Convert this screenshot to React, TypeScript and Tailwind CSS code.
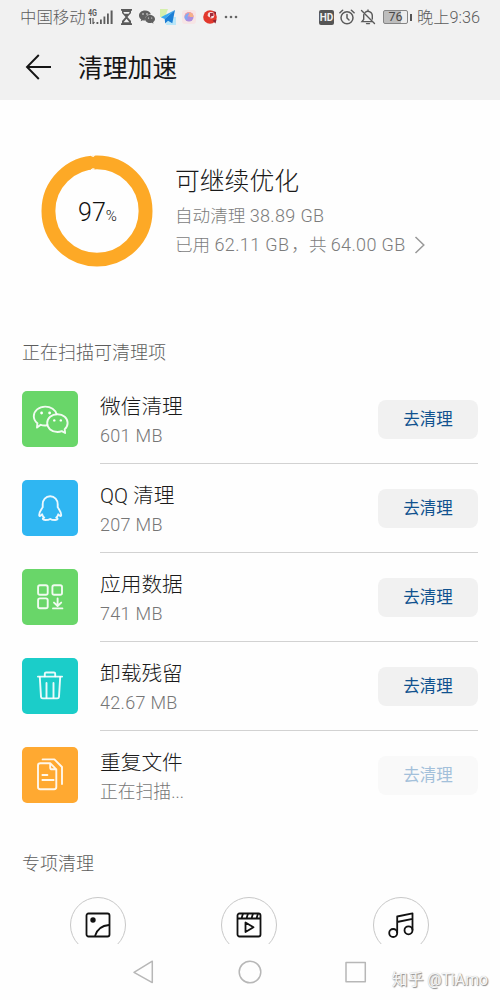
import type { ReactNode } from "react";
import clsx from "clsx";

type CleanItem = {
  title: string;
  size: string;
  color: string;
  icon: ReactNode;
  disabled?: boolean;
};

const items: CleanItem[] = [
  { title: "微信清理", size: "601 MB", color: "bg-[#69d669]", icon: <WechatIcon /> },
  { title: "QQ 清理", size: "207 MB", color: "bg-[#2fb6f2]", icon: <PenguinIcon /> },
  { title: "应用数据", size: "741 MB", color: "bg-[#69d669]", icon: <AppsIcon /> },
  { title: "卸载残留", size: "42.67 MB", color: "bg-[#1bcdc9]", icon: <TrashIcon /> },
  { title: "重复文件", size: "正在扫描...", color: "bg-[#ffa931]", icon: <FilesIcon />, disabled: true },
];

function TileSvg({ children }: { children: ReactNode }) {
  return (
    <svg
      viewBox="0 0 56 56"
      className="size-14"
      fill="none"
      stroke="#fff"
      strokeOpacity="0.9"
      strokeWidth="1.9"
      strokeLinecap="round"
      strokeLinejoin="round"
    >
      {children}
    </svg>
  );
}

function WechatIcon() {
  return (
    <TileSvg>
      <path d="M25 34.3C22.8 34.7 20.6 34.5 18.7 33.8L15 36.6L15.4 32.2C12.9 30.2 11.8 28 11.8 25.2C11.8 19.8 16.9 15.6 23.2 15.6C29 15.6 33.4 18.9 34.5 23" />
      <path d="M35.5 23.2C41.3 23.2 45.6 27.1 45.6 32.1C45.6 34.6 44.5 36.8 42.7 38.3L43.1 42L39.8 40.2C38.5 40.7 37 41 35.5 41C29.6 41 25.2 37.1 25.2 32.1C25.2 27.1 29.6 23.2 35.5 23.2Z" />
      <g fill="#fff" stroke="none">
        <circle cx="19.6" cy="22" r="1.4" />
        <circle cx="27.6" cy="22" r="1.4" />
        <circle cx="32.3" cy="29.4" r="1.2" />
        <circle cx="38.8" cy="29.4" r="1.2" />
      </g>
    </TileSvg>
  );
}

function PenguinIcon() {
  return (
    <TileSvg>
      <path d="M28.2 16.3C23.7 16.3 20.7 19.8 20.7 24.3V27.3C19 29.7 17.1 32.5 17.2 35.1C17.4 36.8 19 35.8 20.1 34.3C20.5 35.7 21.2 36.8 22.2 37.7C20 38.6 20.6 40 23.2 40C25.3 40 27.1 39.7 28.2 38.9C29.3 39.7 31.1 40 33.2 40C35.8 40 36.4 38.6 34.2 37.7C35.2 36.8 35.9 35.7 36.3 34.3C37.4 35.8 39 36.8 39.2 35.1C39.3 32.5 37.4 29.7 35.7 27.3V24.3C35.7 19.8 32.7 16.3 28.2 16.3Z" />
    </TileSvg>
  );
}

function AppsIcon() {
  return (
    <TileSvg>
      <rect x="16.1" y="16.2" width="9.6" height="9.6" rx="1.8" />
      <rect x="30.4" y="16.2" width="9.6" height="9.6" rx="1.8" />
      <rect x="16.1" y="29.4" width="9.6" height="9.8" rx="1.8" />
      <path d="M35.6 29.5V36.6M32 33.6L35.6 37L39.2 33.6M31 39.4H40.4" />
    </TileSvg>
  );
}

function TrashIcon() {
  return (
    <TileSvg>
      <path d="M15.9 18.6H40.1" />
      <path d="M22.8 18.3V15.8C22.8 15 23.3 14.5 24.1 14.5H31.9C32.7 14.5 33.2 15 33.2 15.8V18.3" />
      <path d="M17.8 19L19 38.8C19.1 39.8 19.7 40.4 20.7 40.4H35.3C36.3 40.4 36.9 39.8 37 38.8L38.2 19" />
      <path d="M24.5 25V39.8M31.5 25V39.8" />
    </TileSvg>
  );
}

function FilesIcon() {
  return (
    <TileSvg>
      <path d="M28.2 16.2H18.2C16.9 16.2 16 17.1 16 18.4V40.1C16 41.4 16.9 42.3 18.2 42.3H32.1C33.4 42.3 34.3 41.4 34.3 40.1V22.3L28.2 16.2V20.4C28.2 21.6 28.9 22.3 30.1 22.3H34.3" />
      <path d="M20.6 12.4H32.4L40 20V37M20.4 28H25.4M20.4 33H31.6" />
    </TileSvg>
  );
}

function StatusBar() {
  return (
    <div className="flex h-[34px] items-center pr-[19px] pl-5 text-[#5c5c5c]">
      <span className="w-[66px] pt-[2px] text-[16.4px]">中国移动</span>
      <svg viewBox="0 0 26 18" className="ml-[2px] h-[18px] w-[26px]" fill="#5c5c5c">
        <text x="0" y="7.5" fontSize="8.5" fontWeight="700" textLength="9" lengthAdjust="spacingAndGlyphs">
          4G
        </text>
        <path d="M2.5 10v6M2.5 10l-1.5 2M5 16v-6M5 16l1.5-2" stroke="#5c5c5c" strokeWidth="1.2" />
        <path d="M8.5 14h1.8v2H8.5zM12 11.5h1.8V16H12zM15.5 8.5h1.8V16h-1.8zM19 5.5h1.8V16H19zM22.6 2.5h2V16h-2z" />
      </svg>
      <svg viewBox="0 0 14 16" className="ml-[5px] h-4 w-3.5" fill="#5a5a5a">
        <path d="M2 0h11v1.7H2zM2 14.3h11V16H2zM3 1.7h9V4L8.5 8 12 12v2.3H3V12l3.5-4L3 4z" />
        <path d="M4.3 3h6.4L9.6 4.7H5.4zM4.6 13.3L7.5 9.8l2.9 3.5z" fill="#f1f1f1" />
      </svg>
      <svg viewBox="0 0 16 14" className="ml-[6px] h-3.5 w-4" fill="#606060">
        <path d="M6 .5C2.6.5 0 2.7 0 5.4c0 1.6.9 3 2.200 3.900L1.700 11.300l2.100-1.100c.9.2 1.400.3 2.200.2C5.500 7.200 8 4.500 11.900 4.300 11.300 2.100 9 .5 6 .5z" />
        <path d="M11 5.100c-2.800 0-5 1.800-5 4s2.200 4 5 4c.7 0 1.300-.1 1.900-.3l1.600.9-.4-1.500c1.200-.8 1.900-1.900 1.900-3.100 0-2.200-2.200-4-5-4z" />
        <g fill="#f1f1f1">
          <circle cx="4" cy="4" r=".8" />
          <circle cx="8" cy="4" r=".8" />
          <circle cx="9.5" cy="8" r=".6" />
          <circle cx="12.7" cy="8" r=".6" />
        </g>
      </svg>
      <svg viewBox="0 0 16 16" className="ml-[5px] size-4">
        <path d="M0 0h8L5 8H0z" fill="#d5efac" />
        <path d="M8 8h8v8H6z" fill="#b9e6f8" />
        <path d="M15 1L.8 8.3l3.9 1.7z" fill="#37aaf0" />
        <path d="M15 1L4.7 10l.5 4.5L8 11.7l4.3 2.6z" fill="#1b7fd6" />
      </svg>
      <svg viewBox="0 0 14 14" className="ml-[6px] size-3.5">
        <rect width="14" height="14" rx="3" fill="#f7e5e5" />
        <circle cx="7" cy="7" r="4.5" fill="#ae8fdd" />
        <path d="M2.5 6.5a4.5 4.5 0 0 1 9 0z" fill="#f49aa5" />
        <path d="M3 9a4.5 4.5 0 0 1 5-6C6 5 5 7 5.5 10z" fill="#82a9f2" />
        <path d="M7 2.5a4.5 4.5 0 0 1 4.5 4.5H8z" fill="#f5b187" />
      </svg>
      <svg viewBox="0 0 14 14" className="ml-[7px] size-3.5">
        <circle cx="7" cy="7" r="6.8" fill="#e2382c" />
        <path d="M10 1l3 1v3zM9.5 10.5l4-1-1 4z" fill="#8d2331" />
        <circle cx="8" cy="5.3" r="3.3" fill="#f6dede" />
        <path d="M7 3h3.5v3H8.3v1.5H7z" fill="#a12d3c" />
        <path d="M3.5 5.5l4.5 2.500-3 2z" fill="#e2382c" />
      </svg>
      <svg viewBox="0 0 14 4" className="ml-[7px] h-1 w-3.5" fill="#666">
        <circle cx="2" cy="2" r="1.3" />
        <circle cx="7" cy="2" r="1.3" />
        <circle cx="12" cy="2" r="1.3" />
      </svg>

      <div className="ml-auto flex items-center">
        <span className="flex h-[15px] w-[15px] items-center justify-center rounded-[2px] bg-[#555] text-[10px] font-bold text-[#f1f1f1]">
          HD
        </span>
        <svg viewBox="0 0 16 16" className="ml-[5px] size-4" fill="none" stroke="#5a5a5a" strokeWidth="1.5" strokeLinecap="round">
          <circle cx="8" cy="8.8" r="6" />
          <path d="M8 5.5v3.5l2 2M.9 3.7L3.6 1.3M15.1 3.7L12.4 1.3" />
        </svg>
        <svg viewBox="0 0 16 16" className="ml-[5px] size-4" fill="none" stroke="#5a5a5a" strokeWidth="1.4" strokeLinecap="round">
          <path d="M5.3 3.3A4.3 4.3 0 0 1 12.3 6.8V10M3.7 5.8V10.5L2 12.6H11.7M6.5 14.6h3M8 2V1M1.5 1.5L14.5 14.5" />
        </svg>
        <div className="ml-[7px] flex h-[14px] w-[25px] items-center justify-center rounded-[2px] border border-[#858585] bg-linear-to-r from-[#bdbdbd] from-76% to-[#ededed] to-76% text-[12.5px] font-normal text-[#484848]">
          76
        </div>
        <div className="ml-[2px] h-[7px] w-[2px] bg-[#555]" />
        <span className="ml-[5px] w-[64px] pt-[2px] text-[16.3px] whitespace-nowrap">晚上9:36</span>
      </div>
    </div>
  );
}

function Summary() {
  return (
    <section className="flex h-[222px] items-center pl-[41px]">
      <div className="relative size-[113px]">
        <svg viewBox="0 0 113 113" className="size-[112px]" fill="none">
          <circle cx="56.5" cy="56.5" r="49" stroke="#fda926" strokeWidth="14" />
          <path d="M50.5 .5L52.6 1.4L54 .2M50.5 15.2L52.3 14L54 14.3" stroke="#fff" strokeWidth="1.2" />
        </svg>
        <div className="absolute inset-0 flex items-baseline justify-center pt-[39px] text-[#111]">
          <span className="text-[25px]">97</span>
          <span className="text-[15px]">%</span>
        </div>
      </div>
      <div className="ml-[21px]">
        <h2 className="h-[36px] text-[24.8px] leading-[36px] text-[#1a1a1a]">可继续优化</h2>
        <p className="h-[31px] text-[17.6px] leading-[32px] text-[#7c7c7c]">
          自动清理 <span className="text-[18px] tracking-[0.35px]">38.89 GB</span>
        </p>
        <p className="flex h-[28px] items-center text-[17.6px] leading-[28px] whitespace-pre text-[#7c7c7c]">
          <span>已用 </span>
          <span className="text-[18px] tracking-[0.35px]">62.11 GB</span>
          <span className="ml-[2px]">，共 </span>
          <span className="text-[18px] tracking-[0.35px]">64.00 GB</span>
          <svg viewBox="0 0 12 18" className="ml-[8px] h-[18px] w-3" fill="none" stroke="#999" strokeWidth="1.5">
            <path d="M1.5 1L9.8 9L1.5 17" />
          </svg>
        </p>
      </div>
    </section>
  );
}

function CleanRow({ item, last }: { item: CleanItem; last: boolean }) {
  return (
    <li className="flex h-[89px] items-center">
      <div className={clsx("-mt-px size-14 overflow-hidden rounded-[5px]", item.color)}>{item.icon}</div>
      <div className={clsx("ml-[22px] flex h-full flex-1 items-center justify-between border-b", last ? "border-transparent" : "border-[#d2d2d2]")}>
        <div className="pt-[4px]">
          <h3 className="h-[30px] text-[20.7px] leading-[30px] text-[#1a1a1a]">{item.title}</h3>
          <p className={clsx("h-[28px] leading-[28px] text-[#767676]", item.disabled ? "text-[17.8px]" : "text-[18px] tracking-[0.3px]")}>
            {item.size}
          </p>
        </div>
        <button
          disabled={item.disabled}
          className={clsx(
            "h-[39px] w-[100px] rounded-[8px] pt-[2px] text-[16.5px] font-normal",
            item.disabled ? "bg-[#f9f9f9] text-[#a3c0da]" : "bg-[#f1f1f1] text-[#10528f]"
          )}
        >
          去清理
        </button>
      </div>
    </li>
  );
}

function RoundButton({ children }: { children: ReactNode }) {
  return (
    <div className="flex w-[151.5px] justify-center">
      <div className="flex size-14 items-center justify-center rounded-full border border-[#c8c8c8]">
        <svg viewBox="0 0 28 28" className="size-7" fill="none" stroke="#111" strokeWidth="1.8" strokeLinejoin="round">
          {children}
        </svg>
      </div>
    </div>
  );
}

function NavBar() {
  return (
    <nav className="relative flex h-14 items-center pl-[132px]">
      <svg viewBox="0 0 236 26" className="h-[26px] w-[236px]" fill="none" stroke="#b7b7b7" strokeWidth="1.5" strokeLinejoin="round">
        <path d="M20.3 2.2V23.6L2 13.3Z" />
        <circle cx="118" cy="13" r="10.8" />
        <rect x="214" y="3.5" width="19.3" height="19.3" />
      </svg>
      <span className="absolute top-[25px] right-[12px] text-[15.8px] leading-[22px] font-normal whitespace-nowrap text-[#f6f6f6] [text-shadow:1px_1px_1px_#888,0_0_1px_#bbb]">
        知乎 @TiAmo
      </span>
    </nav>
  );
}

export default function App() {
  return (
    <div className="h-[1000px] w-[500px] overflow-hidden bg-[#fefefe] font-[Roboto,'Noto_Sans_CJK_SC',sans-serif] font-light">
      <header className="h-[100px] bg-[#f1f1f1]">
        <StatusBar />
        <div className="flex h-[66px] items-center pl-[25px]">
          <svg viewBox="0 0 28 28" className="size-7" fill="none" stroke="#151515" strokeWidth="1.9">
            <path d="M26 14H2M13.8 2L2 14L13.8 26" />
          </svg>
          <h1 className="ml-[25px] pt-[4px] text-[24.8px] font-normal text-[#151515]">清理加速</h1>
        </div>
      </header>

      <main className="h-[844px] overflow-hidden">
        <Summary />
        <h2 className="h-[53px] pt-[17px] pl-[22px] text-[18px] leading-[28px] text-[#5c5c5c]">正在扫描可清理项</h2>
        <ul className="px-[22px]">
          {items.map((item, i) => (
            <CleanRow key={item.title} item={item} last={i === items.length - 1} />
          ))}
        </ul>
        <h2 className="h-[77px] pt-[30px] pl-[22px] text-[18px] leading-[28px] text-[#5c5c5c]">专项清理</h2>
        <div className="flex pl-[22px]">
          <RoundButton>
            <rect x="2.5" y="2.5" width="23" height="23" rx="2" />
            <circle cx="9" cy="9" r="1.8" fill="#111" />
            <path d="M11 25C13 18.5 18 14.5 25 14" />
          </RoundButton>
          <RoundButton>
            <rect x="2.5" y="2.5" width="23" height="23" rx="2" />
            <path d="M2.5 7.5H25.5M8 2.5L6.5 7.5M13 2.5L11.5 7.5M18 2.5L16.5 7.5M23 2.5L21.5 7.5M10.5 11.5V21L18.5 16.2Z" />
          </RoundButton>
          <RoundButton>
            <circle cx="6.2" cy="22" r="4" />
            <circle cx="21.5" cy="19.3" r="4" />
            <path d="M10.2 22V5.5L25.5 2.3V19.3M10.2 11L25.5 7.8" />
          </RoundButton>
        </div>
      </main>
      <NavBar />
    </div>
  );
}
